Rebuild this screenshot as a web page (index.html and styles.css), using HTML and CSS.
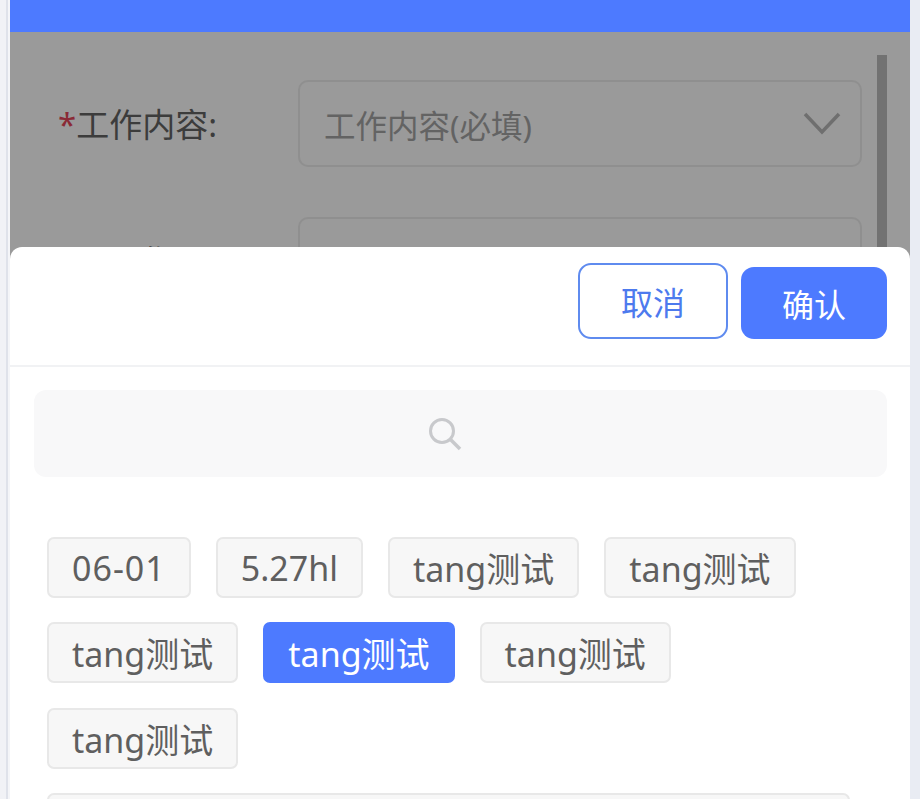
FILE: index.html
```html
<!DOCTYPE html>
<html lang="zh-CN">
<head>
<meta charset="utf-8">
<title>工作内容</title>
<link rel="stylesheet" href="styles.css">
</head>
<body>
<div class="phone">
  <header class="topbar"></header>
  <main class="form">
    <div class="row">
      <label class="label"><span class="star">*</span>工作内容:</label>
      <div class="field">
        <span class="placeholder">工作内容(必填)</span>
        <svg class="chevron" width="38" height="23" viewBox="0 0 38 23"><path d="M2 2 L19 20 L36 2" fill="none" stroke="#6f6f6f" stroke-width="3.5"/></svg>
      </div>
    </div>
    <div class="row">
      <label class="label">工作量:</label>
      <div class="field"><span class="placeholder">工作量(必填)</span></div>
    </div>
    <div class="scrollbar"></div>
  </main>
  <section class="sheet">
    <div class="actions">
      <button class="btn btn-cancel">取消</button>
      <button class="btn btn-ok">确认</button>
    </div>
    <div class="search">
      <svg width="34" height="34" viewBox="0 0 34 34"><circle cx="14" cy="14" r="11.5" fill="none" stroke="#c8c9cc" stroke-width="3"/><path d="M22.5 22.5 L32 32" fill="none" stroke="#c8c9cc" stroke-width="3.5"/></svg>
    </div>
    <div class="tags">
      <span class="tag tag-date">06-01</span>
      <span class="tag">5.27hl</span>
      <span class="tag">tang测试</span>
      <span class="tag">tang测试</span>
      <span class="tag">tang测试</span>
      <span class="tag tag-on">tang测试</span>
      <span class="tag">tang测试</span>
      <span class="tag">tang测试</span>
      <span class="tag tag-long"></span>
    </div>
  </section>
</div>
</body>
</html>
```
FILE: styles.css
```css
* { box-sizing: border-box; }
html, body { margin: 0; height: 100%; }
body {
  background: linear-gradient(to right, #f1f2f6 0 6px, #e9ecf3 6px);
  font-family: "Noto Sans", "Noto Sans CJK SC", sans-serif;
  overflow: hidden;
}
.phone {
  position: relative;
  margin: 0 10px;
  height: 799px;
  background: #9a9a9a;
  box-shadow: -2px 0 0 #f4f5f8, -4px 0 0 #dfe2ea;
  overflow: hidden;
}
.topbar { height: 32px; background: #4d7aff; }
.form { position: relative; padding: 48px 48px 0 48px; }
.row { display: flex; align-items: center; margin-bottom: 50px; }
.label {
  width: 240px;
  height: 87px;
  padding-right: 83px;
  font-size: 33px;
  line-height: 89px;
  color: #3c3c3c;
  white-space: nowrap;
  text-align: right;
}
.star { color: #8a2a36; }
.field {
  flex: 1;
  height: 87px;
  display: flex;
  align-items: center;
  justify-content: space-between;
  padding: 0 19px 0 24px;
  border: 2px solid #8f8f8f;
  border-radius: 10px;
}
.placeholder { font-size: 31.5px; color: #636363; }
.chevron { display: block; }
.scrollbar {
  position: absolute;
  top: 23px;
  right: 23px;
  width: 10px;
  height: 200px;
  background: #727272;
}
.sheet {
  position: absolute;
  left: 0;
  right: 0;
  top: 247px;
  bottom: 0;
  background: #fff;
  border-radius: 12px 12px 0 0;
  overflow: hidden;
}
.actions {
  height: 120px;
  display: flex;
  justify-content: flex-end;
  align-items: flex-end;
  gap: 13px;
  padding: 0 23px 26px 0;
  border-bottom: 2px solid #f1f2f4;
}
.btn {
  font-family: inherit;
  font-size: 32px;
  border-radius: 13px;
  padding: 0;
}
.btn-cancel {
  width: 150px;
  height: 76px;
  background: #fff;
  border: 2px solid #5f8bef;
  color: #4d7aee;
}
.btn-ok {
  width: 146px;
  height: 72px;
  background: #4d7aff;
  border: 0;
  color: #fff;
}
.search {
  margin: 23px 23px 0 24px;
  height: 87px;
  padding-right: 31px;
  background: #f8f8f9;
  border-radius: 12px;
  display: flex;
  align-items: center;
  justify-content: center;
}
.tags {
  display: flex;
  flex-wrap: wrap;
  gap: 24.4px 25px;
  padding: 60px 60px 0 37px;
}
.tag {
  height: 61px;
  padding: 0 23px;
  display: flex;
  align-items: center;
  font-size: 34px;
  color: #5f5f5f;
  background: #f7f7f7;
  border: 2px solid #e8e8e8;
  border-radius: 7px;
  white-space: nowrap;
}
.tag-date { letter-spacing: 1px; }
.tag-on { background: #4d7aff; border-color: #4d7aff; color: #fff; }
.tag-long { width: 803px; }
```
